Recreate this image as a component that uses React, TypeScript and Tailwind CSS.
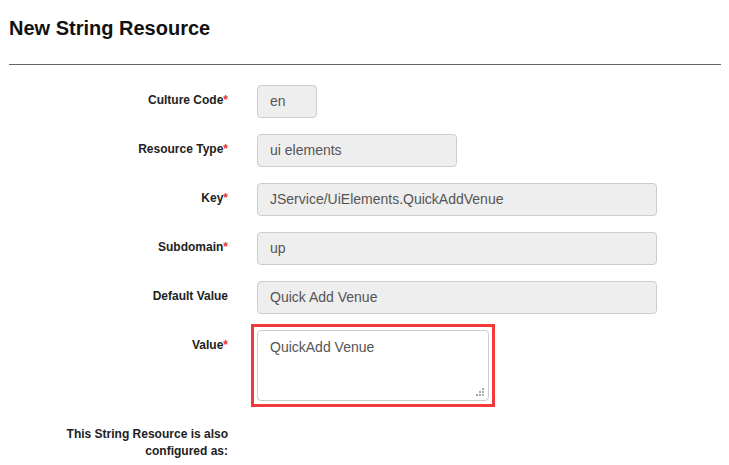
import React from "react";

type Row = { label: string; required: boolean; value: string; width: string };

const rows: Row[] = [
  { label: "Culture Code", required: true, value: "en", width: "w-[60px]" },
  { label: "Resource Type", required: true, value: "ui elements", width: "w-[200px]" },
  { label: "Key", required: true, value: "JService/UiElements.QuickAddVenue", width: "w-[400px]" },
  { label: "Subdomain", required: true, value: "up", width: "w-[400px]" },
  { label: "Default Value", required: false, value: "Quick Add Venue", width: "w-[400px]" },
];

const Label = ({ text, required }: { text: string; required?: boolean }) => (
  <div className="w-[219px] shrink-0 pl-[50px] pt-[7px] text-right text-[12px] leading-[17px] font-bold text-[#222]">
    {text}
    {required && <span className="text-[#e8322c]">*</span>}
  </div>
);

// dotted resize grip drawn in the corner of the textarea
const Grip = () => (
  <svg className="pointer-events-none absolute right-[8px] bottom-[8px]" width="9" height="9" viewBox="0 0 9 9">
    <g fill="#aaa">
      <rect x="7" y="1" width="2" height="2" />
      <rect x="4" y="4" width="2" height="2" />
      <rect x="7" y="4" width="2" height="2" />
      <rect x="1" y="7" width="2" height="2" />
      <rect x="4" y="7" width="2" height="2" />
      <rect x="7" y="7" width="2" height="2" />
    </g>
  </svg>
);

export default function App() {
  return (
    <div className="min-h-[465px] bg-white pl-[9px] pr-[8px] font-['Liberation_Sans',Arial,sans-serif]">
      <h1 className="pt-[17px] text-[20px] leading-[22px] font-bold text-[#111]">New String Resource</h1>
      <hr className="mt-[25px] border-0 border-t border-[#666]" />

      <div className="mt-[20px] flex flex-col gap-[16px]">
        {rows.map((r) => (
          <div key={r.label} className="flex">
            <Label text={r.label} required={r.required} />
            <div
              className={`ml-[29px] flex h-[33px] ${r.width} items-center rounded-[4px] border border-[#ccc] bg-[#eee] px-[12px] text-[14px] text-[#555]`}
            >
              {r.value}
            </div>
          </div>
        ))}

        {/* textarea with the red highlight box */}
        <div className="flex">
          <Label text="Value" required />
          <div className="relative -my-[6px] ml-[23px] border-[3px] border-[#f2393b] p-[3px]">
            <textarea
              readOnly
              defaultValue="QuickAdd Venue"
              className="block h-[71px] w-[232px] resize-none rounded-[4px] border border-[#ccc] bg-white px-[12px] py-[6px] text-[14px] leading-[20px] text-[#555] outline-none"
            />
            <Grip />
          </div>
        </div>

        <div className="mt-[2px] flex">
          <Label text="This String Resource is also configured as:" />
        </div>
      </div>
    </div>
  );
}
